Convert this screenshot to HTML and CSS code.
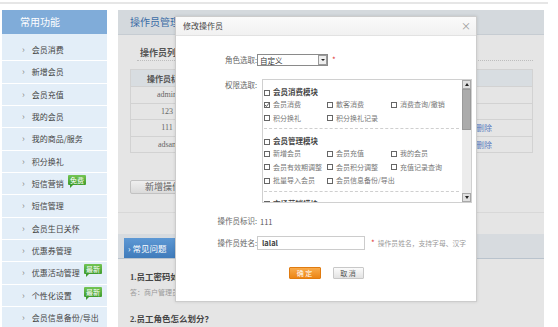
FILE: index.html
```html
<!DOCTYPE html>
<html lang="zh-CN">
<head>
 <meta charset="UTF-8">
 <title>操作员管理</title>
 <link rel="stylesheet" href="styles.css">
</head>
<body>
 <div class="topline"></div>

 <div class="page">
  <aside class="sidebar">
   <div class="side-head">常用功能</div>
   <ul class="side-menu">
    <li>会员消费</li>
    <li>新增会员</li>
    <li>会员充值</li>
    <li>我的会员</li>
    <li>我的商品/服务</li>
    <li>积分换礼</li>
    <li>短信营销 <span class="badge badge-free">免费</span></li>
    <li>短信管理</li>
    <li>会员生日关怀</li>
    <li>优惠券管理</li>
    <li>优惠活动管理 <span class="badge badge-new">最新</span></li>
    <li>个性化设置 <span class="badge badge-new">最新</span></li>
    <li>会员信息备份/导出</li>
   </ul>
  </aside>

  <main class="panel">
   <div class="panel-head">操作员管理</div>

   <div class="op-section">
    <div class="list-title">操作员列表</div>
    <!-- middle columns sit under the dialog -->
    <table class="op-table">
     <tr><th class="col-id">操作员标识</th><th></th><th></th><th></th><th class="col-op"></th></tr>
     <tr><td class="val">admin</td><td></td><td></td><td></td><td class="col-op"></td></tr>
     <tr><td class="val">123</td><td></td><td></td><td></td><td class="col-op"></td></tr>
     <tr><td class="val">111</td><td></td><td></td><td></td><td class="col-op"><a class="del">删除</a></td></tr>
     <tr><td class="val">adsan</td><td></td><td></td><td></td><td class="col-op"><a class="del">删除</a></td></tr>
    </table>
    <button class="add-btn">新增操作员</button>
   </div>

   <div class="faq">
    <div class="faq-bar"><span class="faq-tab">› 常见问题</span></div>
    <div class="faq-q">1.员工密码如何修改？</div>
    <div class="faq-a">答：商户管理员可在操作员列表中修改。</div>
    <div class="faq-q faq-q2">2.员工角色怎么划分？</div>
   </div>

   <div class="modal">
    <div class="modal-title">
     <span>修改操作员</span>
     <span class="close">×</span>
    </div>
    <div class="modal-body">
     <div class="form-row">
      <label class="form-label">角色选取:</label>
      <div class="select">
       <span>自定义</span>
       <span class="select-btn"></span>
      </div>
      <span class="req">*</span>
     </div>

     <div class="form-row row-perms">
      <label class="form-label">权限选取:</label>
      <div class="perm-box">
       <div class="perm-list">
        <div class="perm-group">
         <div class="group-title"><span class="cb"></span>会员消费模块</div>
         <div class="perm-items">
          <span><span class="cb checked"><svg viewBox="0 0 6 6"><path d="M1 3 L2.4 4.5 L5 1.2" fill="none" stroke="#444" stroke-width="0.9"/></svg></span>会员消费</span>
          <span><span class="cb"></span>散客消费</span>
          <span><span class="cb"></span>消费查询/撤销</span>
          <span><span class="cb"></span>积分换礼</span>
          <span><span class="cb"></span>积分换礼记录</span>
         </div>
        </div>
        <div class="perm-group">
         <div class="group-title"><span class="cb"></span>会员管理模块</div>
         <div class="perm-items">
          <span><span class="cb"></span>新增会员</span>
          <span><span class="cb"></span>会员充值</span>
          <span><span class="cb"></span>我的会员</span>
          <span><span class="cb"></span>会员有效期调整</span>
          <span><span class="cb"></span>会员积分调整</span>
          <span><span class="cb"></span>充值记录查询</span>
          <span><span class="cb"></span>批量导入会员</span>
          <span><span class="cb"></span>会员信息备份/导出</span>
         </div>
        </div>
        <div class="perm-group">
         <div class="group-title"><span class="cb"></span>市场营销模块</div>
        </div>
       </div>
       <div class="scrollbar">
        <span class="sb-btn sb-up"></span>
        <span class="sb-thumb"></span>
        <span class="sb-track"></span>
        <span class="sb-btn sb-down"></span>
       </div>
      </div>
     </div>

     <div class="form-row row-id">
      <label class="form-label">操作员标识:</label>
      <span class="id-value">111</span>
     </div>

     <div class="form-row row-name">
      <label class="form-label">操作员姓名:</label>
      <div class="text-input">lalal</div>
      <span class="req">*</span>
      <span class="hint">操作员姓名，支持字母、汉字</span>
     </div>

     <div class="modal-actions">
      <button class="btn-ok">确 定</button>
      <button class="btn-cancel">取 消</button>
     </div>
    </div>
   </div>
  </main>
 </div>
</body>
</html>
```

FILE: styles.css
```css
/* Old-style admin page: sidebar + operator panel with an edit dialog */
:root {
 --side-bg: #e3eef8;
 --side-head: #80acd9;
 --panel-bg: #e5e5e5;
 --panel-head: #d4d9dd;
 --line: #d2d2d2;
 --text: #333333;
 --muted: #999999;
}

html,
body {
 margin: 0;
 padding: 0;
 overflow: hidden;
 background: #ffffff;
}

body {
 font-family: "Noto Sans CJK SC", sans-serif;
 color: var(--text);
 width: 558px;
 height: 327px;
}

.topline {
 width: 548px;
 height: 2px;
 margin-top: 2px;
 background: #e6e6e6;
}

.page {
 display: flex;
 align-items: flex-start;
 gap: 11px;
 padding-left: 2px;
 margin-top: 6px;
}

/* --- Sidebar --- */
.sidebar {
 width: 105px;
 height: 330px;
 background: var(--side-bg);
 flex-shrink: 0;
}

.side-head {
 height: 24px;
 line-height: 24px;
 background: var(--side-head);
 color: #ffffff;
 font-size: 10px;
 padding-left: 18px;
}

.side-menu {
 list-style: none;
 margin: 0;
 padding: 5px 0 0;
}

.side-menu li {
 position: relative;
 height: 21.33px;
 line-height: 21.33px;
 border-bottom: 1px solid #ffffff;
 padding-left: 20px;
 font-size: 8px;
 color: #444;
 white-space: nowrap;
}

.side-menu li::before {
 content: "›";
 color: #8a8a8a;
 font-size: 9px;
 margin-right: 7px;
}

.badge {
 position: absolute;
 top: 2px;
 line-height: 10px;
 padding: 0 2px;
 font-size: 7px;
 color: #ffffff;
 background: linear-gradient(#74c554, #3e9c2d);
 border-radius: 1px;
}

.badge::after {
 content: "";
 position: absolute;
 left: 2px;
 bottom: -3px;
 border-left: 3px solid #3e9c2d;
 border-bottom: 3px solid transparent;
}

.badge-free {
 left: 66px;
}

.badge-new {
 left: 82px;
}

/* --- Main panel --- */
.panel {
 position: relative;
 width: 426px;
 height: 330px;
 background: var(--panel-bg);
 flex-shrink: 0;
 overflow: hidden;
}

.panel-head {
 height: 24px;
 line-height: 24px;
 background: var(--panel-head);
 border-bottom: 1px solid #c6ccd2;
 color: #3b6ca6;
 font-size: 10px;
 padding-left: 12px;
}

.op-section {
 padding: 0 11px 18px 12px;
 border-bottom: 1px solid #d8d8d8;
}

.list-title {
 margin-left: 7px;
 padding: 13px 0 2px 3px;
 line-height: 10px;
 font-size: 9px;
 font-weight: bold;
 color: #555;
 border-bottom: 1px dotted #bdbdbd;
}

.op-table {
 width: 100%;
 margin-top: 8px;
 border-collapse: collapse;
 font-size: 8px;
 color: #666;
}

.op-table th,
.op-table td {
 border: 1px solid var(--line);
 padding: 0;
 text-align: center;
 white-space: nowrap;
}

.op-table th {
 height: 16px;
 background: #d8dde1;
 font-weight: bold;
 color: #555;
}

.op-table td {
 height: 15.5px;
}

.op-table .col-id {
 width: 72px;
}

.op-table .val {
 font-family: "Liberation Serif", serif;
}

.op-table .col-op {
 width: 56px;
 text-align: left;
 padding-left: 5px;
}

.del {
 color: #5b7dc0;
}

.add-btn {
 display: block;
 margin-top: 27px;
 width: 75px;
 height: 14px;
 padding: 0;
 font-family: inherit;
 font-size: 9px;
 line-height: 12px;
 color: #666;
 background: linear-gradient(#efefef, #dadada);
 border: 1px solid #c2c2c2;
 border-radius: 2px;
}

/* --- FAQ --- */
.faq {
 margin-top: 21px;
}

.faq-bar {
 height: 24px;
 background: #d7dbdf;
 border-bottom: 1px solid #b9c3cd;
 display: flex;
 align-items: flex-end;
 padding-left: 6px;
}

.faq-tab {
 width: 51px;
 height: 20px;
 line-height: 20px;
 padding-left: 4px;
 box-sizing: border-box;
 background: linear-gradient(#5d98d4, #3f7bbb);
 color: #ffffff;
 font-size: 8.5px;
 white-space: nowrap;
}

.faq-q {
 padding-left: 12px;
 margin-top: 12px;
 line-height: 12px;
 font-family: "Liberation Serif", "Noto Sans CJK SC", serif;
 font-size: 8.5px;
 font-weight: bold;
 color: #444;
}

.faq-a {
 padding-left: 12px;
 margin-top: 4px;
 line-height: 10px;
 font-size: 7px;
 color: var(--muted);
}

.faq-q2 {
 margin-top: 16px;
}

/* --- Edit dialog --- */
.modal {
 position: absolute;
 left: 57px;
 top: 6px;
 width: 302px;
 height: 286px;
 box-sizing: border-box;
 background: #ffffff;
 border: 1px solid #cccccc;
 box-shadow: 0 0 3px rgba(0, 0, 0, 0.12);
}

.modal-title {
 display: flex;
 justify-content: space-between;
 height: 18px;
 line-height: 18px;
 padding: 0 5px 0 7px;
 background: linear-gradient(#fafafa, #f1f1f1);
 border-bottom: 1px solid #e2e2e2;
 font-size: 8px;
 color: #444;
}

.close {
 font-size: 10px;
 color: #999;
}

.modal-body {
 padding-top: 18px;
 font-size: 7.5px;
 color: #666;
}

.form-row {
 display: flex;
 align-items: center;
 height: 12px;
}

.form-label {
 width: 81px;
 flex-shrink: 0;
 text-align: right;
 line-height: 12px;
 white-space: nowrap;
}

.select {
 display: flex;
 justify-content: space-between;
 align-items: center;
 width: 71px;
 height: 12px;
 box-sizing: border-box;
 border: 1px solid #8a8a8a;
 padding-left: 2px;
 color: #333;
}

.select-btn {
 position: relative;
 width: 9px;
 height: 10px;
 box-sizing: border-box;
 border: 1px solid #9a9a9a;
 background: #eeeeee;
}

.select-btn::after {
 content: "";
 position: absolute;
 left: 2px;
 top: 3px;
 border-left: 2px solid transparent;
 border-right: 2px solid transparent;
 border-top: 2px solid #222;
}

.req {
 margin-left: 4px;
 color: #e03a3a;
 font-size: 8px;
 line-height: 12px;
}

.row-perms {
 align-items: flex-start;
 height: auto;
 margin-top: 13px;
}

.perm-box {
 display: flex;
 width: 210px;
 height: 124px;
 margin-left: 5px;
 box-sizing: border-box;
 border: 1px solid #d0d0d0;
}

.perm-list {
 flex: 1;
 overflow: hidden;
 padding-left: 1px;
}

.perm-group {
 margin-right: 3px;
 padding: 6px 0 3px;
 border-bottom: 1px dashed #cfcfcf;
}

.group-title {
 line-height: 12px;
 font-size: 7.5px;
 font-weight: bold;
 color: #444;
 white-space: nowrap;
}

.perm-items {
 display: grid;
 grid-template-columns: 63px 64px auto;
 font-size: 7px;
 color: #777;
}

.perm-items > span {
 line-height: 13.5px;
 white-space: nowrap;
}

.cb {
 display: inline-block;
 width: 6px;
 height: 6px;
 box-sizing: border-box;
 border: 1px solid #666;
 background: #fff;
 margin-right: 3px;
 vertical-align: -0.5px;
 position: relative;
}

.cb svg {
 position: absolute;
 left: -1px;
 top: -1px;
 width: 6px;
 height: 6px;
}

.scrollbar {
 display: flex;
 flex-direction: column;
 width: 9px;
 flex-shrink: 0;
 background: #ececec;
}

.sb-btn {
 position: relative;
 height: 9px;
 box-sizing: border-box;
 border: 1px solid #a8a8a8;
 background: #e0e0e0;
}

.sb-btn::after {
 content: "";
 position: absolute;
 left: 1.5px;
 border-left: 2px solid transparent;
 border-right: 2px solid transparent;
}

.sb-up::after {
 top: 2px;
 border-bottom: 3px solid #222;
}

.sb-down::after {
 top: 2px;
 border-top: 3px solid #222;
}

.sb-thumb {
 height: 41px;
 background: #ababab;
 border: 1px solid #9a9a9a;
 box-sizing: border-box;
}

.sb-track {
 flex: 1;
}

.row-id {
 margin-top: 12px;
}

.id-value {
 margin-left: 3px;
 color: #555;
}

.row-name {
 margin-top: 9px;
 height: 14px;
}

.text-input {
 width: 108px;
 height: 14px;
 box-sizing: border-box;
 border: 1px solid #cccccc;
 padding-left: 4px;
 line-height: 12px;
 font-weight: bold;
 color: #444;
}

.row-name .req {
 margin-left: 6px;
}

.hint {
 margin-left: 3px;
 font-size: 6.8px;
 color: var(--muted);
 white-space: nowrap;
}

.modal-actions {
 display: flex;
 justify-content: center;
 gap: 12px;
 margin-top: 17px;
}

.btn-ok,
.btn-cancel {
 height: 12px;
 padding: 0;
 font-family: inherit;
 font-size: 7px;
 line-height: 10px;
 border-radius: 1px;
}

.btn-ok {
 width: 32px;
 color: #fff;
 background: linear-gradient(#f9ab4b, #ec8514);
 border: 1px solid #e07b10;
}

.btn-cancel {
 width: 31px;
 color: #555;
 background: linear-gradient(#fbfbfb, #e3e3e3);
 border: 1px solid #c8c8c8;
}
```
